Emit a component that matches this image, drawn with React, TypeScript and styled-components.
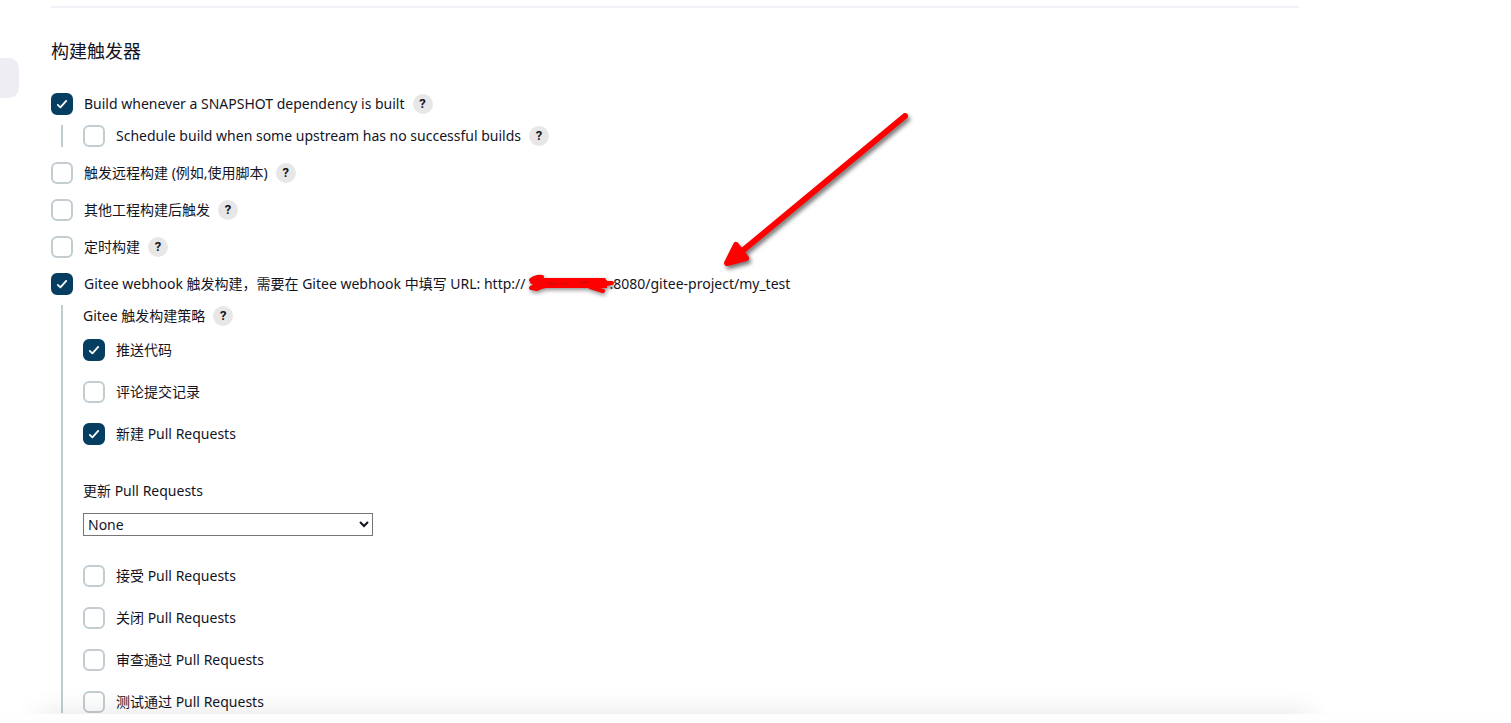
import React from "react";
import styled, { createGlobalStyle } from "styled-components";

const GlobalStyle = createGlobalStyle`
  *, *::before, *::after { box-sizing: border-box; }
  body {
    margin: 0;
    background: #fff;
    color: #14141f;
    font-family: "Noto Sans", "Noto Sans CJK SC", sans-serif;
    font-size: 14px;
    line-height: 22px;
  }
`;

const Page = styled.div`
  position: relative;
  height: 100vh;
  display: grid;
  grid-template-rows: minmax(0, 1fr) auto;
  overflow: hidden;
`;

const Body = styled.div`
  display: flex;
  gap: 32px;
  padding-right: 212px;
  overflow: hidden;
`;

const SidePanel = styled.aside`
  flex: none;
  width: 19px;
  padding-top: 58px;
`;

const SideItem = styled.div`
  height: 40px;
  border-radius: 0 10px 10px 0;
  background: #ededf3;
`;

const Main = styled.main`
  flex: 1;
  min-width: 0;
  padding-top: 6px;
`;

const Section = styled.section`
  border-top: 2px solid #f1f2f7;
  padding-top: 30px;
`;

const Title = styled.h2`
  margin: 0 0 28px;
  font-size: 18px;
  font-weight: 400;
  line-height: 27px;
`;

const List = styled.div<{ $gap: number }>`
  display: flex;
  flex-direction: column;
  gap: ${(p) => p.$gap}px;
`;

const Nested = styled.div`
  display: flex;
  flex-direction: column;
  margin: 10px 0 0 10px;
  border-left: 2px solid #c1cdd1;
  padding-left: 20px;
`;

const Row = styled.div`
  display: flex;
  align-items: center;
  gap: 8px;
  height: 22px;
`;

const CheckLabel = styled.label`
  display: flex;
  align-items: center;
  gap: 11px;
  white-space: nowrap;
`;

const Box = styled.span`
  position: relative;
  width: 22px;
  height: 22px;
  flex: none;
`;

const CheckInput = styled.input`
  appearance: none;
  display: block;
  margin: 0;
  width: 22px;
  height: 22px;
  border: 2px solid #c3cdd1;
  border-radius: 6px;
  background: #fff;
  &:checked {
    border-color: #063e61;
    background: #063e61;
  }
  &:checked + svg { display: block; }
`;

const Tick = styled.svg`
  display: none;
  position: absolute;
  inset: 0;
  pointer-events: none;
`;

const HelpButton = styled.button`
  width: 20px;
  height: 20px;
  padding: 0;
  border: 0;
  border-radius: 50%;
  background: #e7e7e8;
  color: #14141f;
  font: 700 13px/20px Roboto, sans-serif;
`;

const Group = styled.div<{ $top: number }>`
  margin-top: ${(p) => p.$top}px;
`;

const FieldLabel = styled.label`
  display: block;
  margin-bottom: 11px;
`;

const Select = styled.select`
  display: block;
  width: 290px;
  height: 23px;
  padding: 0;
  border: 1px solid #767676;
  border-radius: 0;
  background: #fff;
  color: #14141f;
  font: 14px "Noto Sans", sans-serif;
`;

const Host = styled.span`
  position: relative;
  display: inline-block;
  width: 84px;
  height: 10px;
`;

const Scribble = styled.svg`
  position: absolute;
  left: 2px;
  top: -5px;
  overflow: visible;
  filter: drop-shadow(1px 2px 2px rgba(0, 0, 0, 0.45));
`;

const Arrow = styled.svg`
  position: absolute;
  left: 715px;
  top: 105px;
  overflow: visible;
  pointer-events: none;
  filter: drop-shadow(2px 3px 2px rgba(0, 0, 0, 0.55));
`;

const Footer = styled.footer`
  position: relative;
  height: 9px;
  background: #fefefe;
`;

const FooterShade = styled.div`
  position: absolute;
  bottom: 100%;
  left: 20px;
  right: 180px;
  height: 28px;
  overflow: hidden;
  &::after {
    content: "";
    position: absolute;
    top: 28px;
    left: 18px;
    right: 18px;
    height: 60px;
    border-radius: 10px;
    box-shadow: 0 0 30px rgba(0, 0, 0, 0.11);
  }
`;

function Help({ topic }: { topic: string }) {
  return <HelpButton type="button" aria-label={`Help: ${topic}`}>?</HelpButton>;
}

function Check({ text, checked, help, children }: {
  text: string;
  checked?: boolean;
  help?: boolean;
  children?: React.ReactNode;
}) {
  return (
    <Row>
      <CheckLabel>
        <Box>
          <CheckInput type="checkbox" defaultChecked={checked} />
          <Tick width="22" height="22" viewBox="0 0 22 22" fill="none" stroke="#fff" strokeWidth="1.8" strokeLinecap="round" strokeLinejoin="round">
            <path d="M6.8 11.9l2.6 2.5 5.8-6.5" />
          </Tick>
        </Box>
        <span>{text}{children}</span>
      </CheckLabel>
      {help && <Help topic={text} />}
    </Row>
  );
}

export default function App() {
  return (
    <>
      <GlobalStyle />
      <Page>
        <Body>
          <SidePanel><SideItem /></SidePanel>
          <Main>
            <Section>
              <Title>构建触发器</Title>
              <List $gap={15}>
                <div>
                  <Check text="Build whenever a SNAPSHOT dependency is built" checked help />
                  <Nested>
                    <Check text="Schedule build when some upstream has no successful builds" help />
                  </Nested>
                </div>
                <Check text="触发远程构建 (例如,使用脚本)" help />
                <Check text="其他工程构建后触发" help />
                <Check text="定时构建" help />
                <div>
                  <Check text="Gitee webhook 触发构建，需要在 Gitee webhook 中填写 URL: http://" checked>
                    <Host>
                      <Scribble width="88" height="20" viewBox="0 0 88 20" fill="none" aria-hidden="true">
                        <path d="M3 6Q8 2 14 3L4 8L11 9L3 14L9 15Q18 10 30 9L84 9L62 13L75 17" stroke="red" strokeWidth="4" strokeLinecap="round" strokeLinejoin="round" />
                        <path d="M11 5L16 4H77L79 7V14H18L9 16z" fill="red" />
                        <path d="M19 9l11 1M33 10l7 -1M52 9l8 -1" stroke="#b01414" strokeWidth="1" />
                      </Scribble>
                    </Host>
                    :8080/gitee-project/my_test
                  </Check>
                  <Nested>
                    <Row><span>Gitee 触发构建策略</span><Help topic="Gitee 触发构建策略" /></Row>
                    <Group $top={12}>
                      <List $gap={20}>
                        <Check text="推送代码" checked />
                        <Check text="评论提交记录" />
                        <Check text="新建 Pull Requests" checked />
                      </List>
                    </Group>
                    <Group $top={35}>
                      <FieldLabel htmlFor="update-pr">更新 Pull Requests</FieldLabel>
                      <Select id="update-pr" defaultValue="None">
                        <option>None</option>
                      </Select>
                    </Group>
                    <Group $top={29}>
                      <List $gap={20}>
                        <Check text="接受 Pull Requests" />
                        <Check text="关闭 Pull Requests" />
                        <Check text="审查通过 Pull Requests" />
                        <Check text="测试通过 Pull Requests" />
                      </List>
                    </Group>
                  </Nested>
                </div>
              </List>
            </Section>
          </Main>
        </Body>
        <Footer><FooterShade /></Footer>
        <Arrow width="200" height="170" viewBox="0 0 200 170" fill="none" stroke="red" strokeWidth="6" strokeLinecap="round" strokeLinejoin="round" aria-hidden="true">
          <path d="M190 11L26 147" />
          <path d="M12 158L21 140L31 153z" fill="red" />
        </Arrow>
      </Page>
    </>
  );
}
